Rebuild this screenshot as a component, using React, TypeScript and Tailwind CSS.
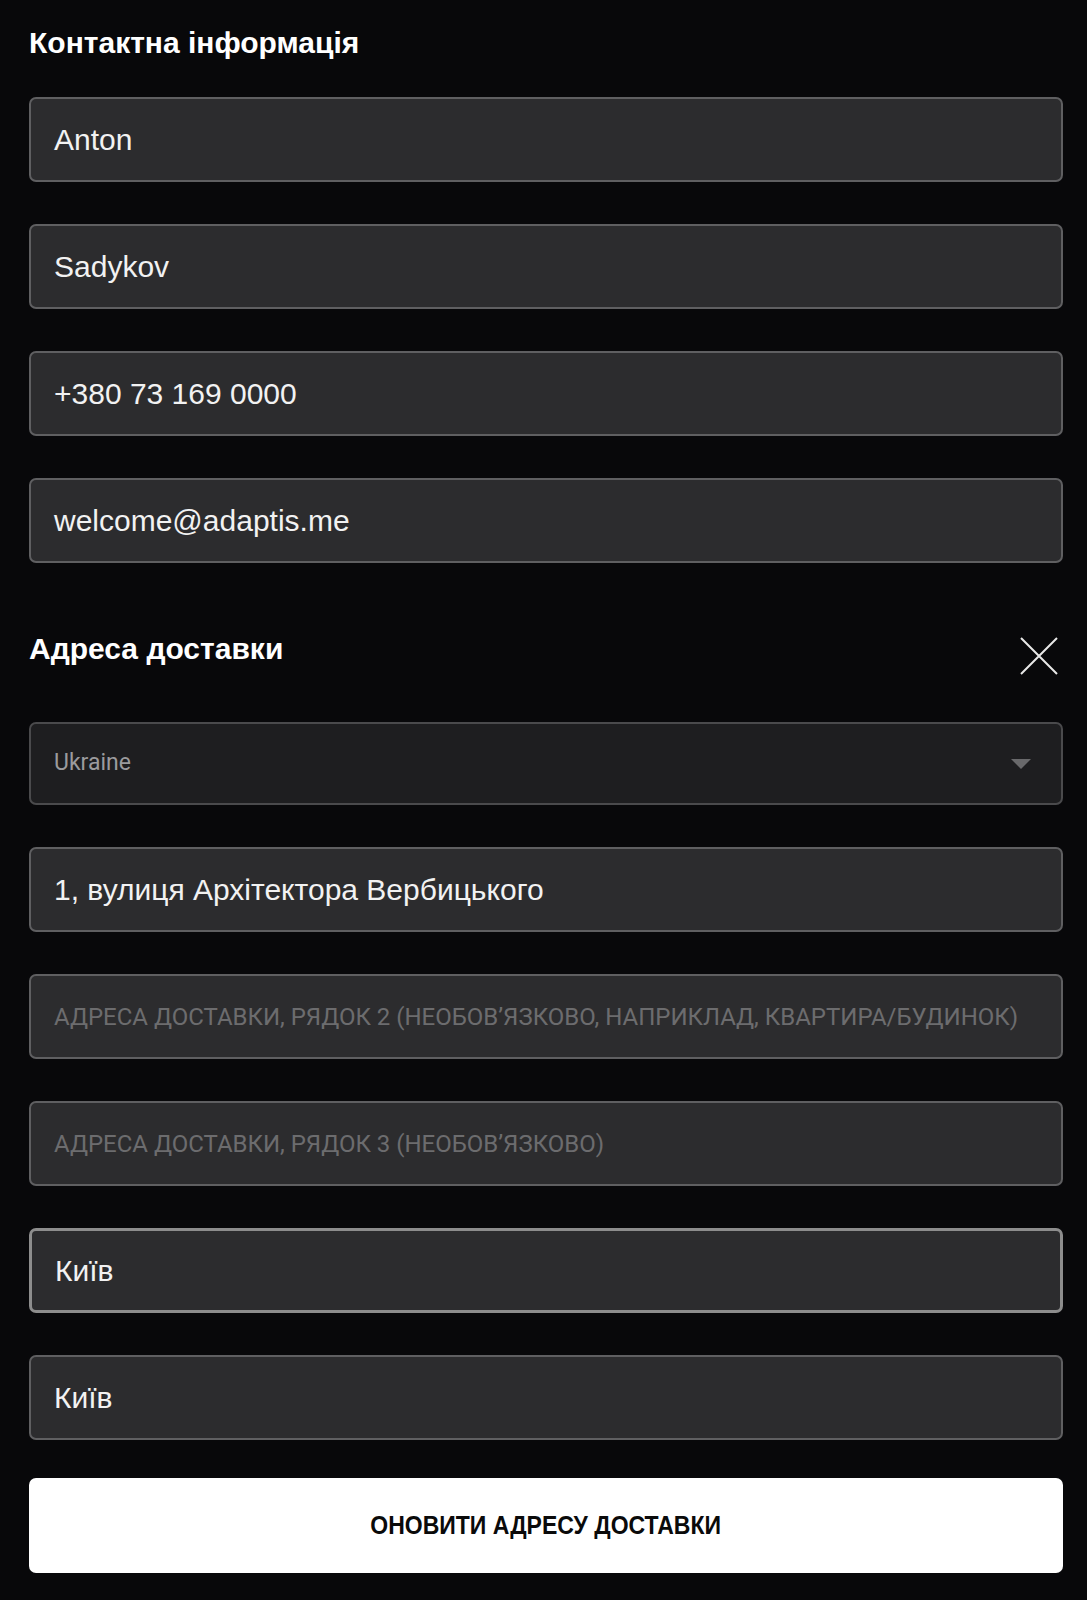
import React from "react";

const contact = ["Anton", "Sadykov", "+380 73 169 0000", "welcome@adaptis.me"];

function Field({ value, placeholder, focused }: { value?: string; placeholder?: string; focused?: boolean }) {
  return (
    <div
      className={
        "flex h-[85px] items-center rounded-[7px] bg-[#2c2c2e] px-[23px] " +
        (focused ? "border-[3px] border-[#8d8d8d] px-[22px]" : "border-2 border-[#5f5f61]")
      }
    >
      {value ? (
        <span className="font-['Liberation_Sans',sans-serif] text-[30px] text-[#f2f2f2]">{value}</span>
      ) : (
        <span className="font-['Roboto',sans-serif] text-[24px] uppercase text-[#6c6c6e]">{placeholder}</span>
      )}
    </div>
  );
}

export default function App() {
  return (
    <div className="min-h-[1600px] bg-[#08080a] pl-[29px] pr-[24px] pt-[25px]">
      <h2 className="font-['Liberation_Sans',sans-serif] text-[30px] font-bold leading-[35px] text-white">
        Контактна інформація
      </h2>

      <div className="mt-[37px] flex flex-col gap-[42px]">
        {contact.map((v) => (
          <Field key={v} value={v} />
        ))}
      </div>

      <div className="mt-[68px] flex items-start justify-between">
        <h2 className="font-['Liberation_Sans',sans-serif] text-[30px] font-bold leading-[35px] text-white">
          Адреса доставки
        </h2>
        <svg width="38" height="38" viewBox="0 0 38 38" className="mr-[5px] mt-[6px]">
          <path d="M1 1 L37 37 M37 1 L1 37" stroke="#e8e8e8" strokeWidth="2" />
        </svg>
      </div>

      <div className="mt-[47px] flex h-[83px] items-center justify-between rounded-[7px] border-2 border-[#4a4a4c] bg-[#1e1e20] pl-[23px] pr-[30px]">
        <span className="font-['Roboto',sans-serif] text-[23px] text-[#9b9b9d]">Ukraine</span>
        <span className="h-0 w-0 border-x-[10px] border-t-[10px] border-x-transparent border-t-[#69696b]" />
      </div>

      <div className="mt-[42px] flex flex-col gap-[42px]">
        <Field value="1, вулиця Архітектора Вербицького" />
        <Field placeholder="Адреса доставки, рядок 2 (необов’язково, наприклад, квартира/будинок)" />
        <Field placeholder="Адреса доставки, рядок 3 (необов’язково)" />
        <Field value="Київ" focused />
        <Field value="Київ" />
      </div>

      <button className="mt-[38px] flex h-[95px] w-full items-center justify-center rounded-[7px] bg-white">
        <span className="inline-block scale-x-[0.92] font-['Liberation_Sans',sans-serif] text-[25px] font-bold uppercase text-[#0a0a0a]">
          Оновити адресу доставки
        </span>
      </button>
    </div>
  );
}
